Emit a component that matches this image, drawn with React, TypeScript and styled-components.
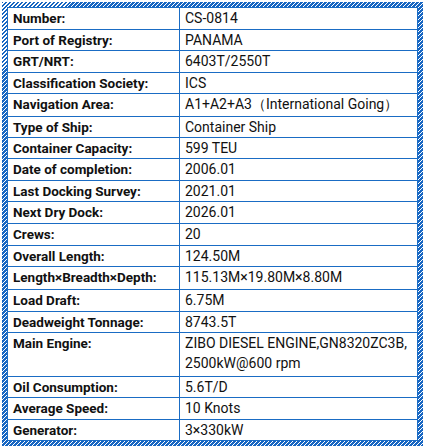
import React from "react";
import styled, { createGlobalStyle } from "styled-components";

const Global = createGlobalStyle`
  html, body { margin: 0; padding: 0; background: #fff; }
  body { font-family: "Roboto", "Noto Sans", sans-serif; }
`;

const Frame = styled.div`
  margin: 2px;
  width: 411px;
  padding: 5px;
  background: repeating-linear-gradient(-45deg, #1766c2 0 1.5px, #ffffff 1.5px 2.828px);
`;

const Table = styled.div`
  background: #fff;
  border: 1px solid #1a6cc4;
  display: grid;
  grid-template-columns: 172px 1fr;
`;

const Label = styled.div<{ $h: number; $last?: boolean }>`
  border-right: 1px solid #1a6cc4;
  border-bottom: ${(p) => (p.$last ? "none" : "1px solid #1a6cc4")};
  padding: 0 5px;
  height: ${(p) => p.$h}px;
  line-height: 20.5px;
  font-weight: 700;
  font-size: 13.5px;
  color: #111;
  white-space: nowrap;
`;

const Value = styled.div<{ $h: number; $last?: boolean }>`
  border-bottom: ${(p) => (p.$last ? "none" : "1px solid #1a6cc4")};
  padding: 0 5px;
  height: ${(p) => p.$h}px;
  line-height: 20.5px;
  font-size: 14px;
  color: #111;
  white-space: nowrap;
`;

const rows: [string, string[], number][] = [
  ["Number:", ["CS-0814"], 20.7],
  ["Port of Registry:", ["PANAMA"], 20.3],
  ["GRT/NRT:", ["6403T/2550T"], 20.7],
  ["Classification Society:", ["ICS"], 20.3],
  ["Navigation Area:", ["A1+A2+A3（International Going）"], 21.7],
  ["Type of Ship:", ["Container Ship"], 20.3],
  ["Container Capacity:", ["599 TEU"], 20],
  ["Date of completion:", ["2006.01"], 20.7],
  ["Last Docking Survey:", ["2021.01"], 20.6],
  ["Next Dry Dock:", ["2026.01"], 20.7],
  ["Crews:", ["20"], 21],
  ["Overall Length:", ["124.50M"], 19.7],
  ["Length×Breadth×Depth:", ["115.13M×19.80M×8.80M"], 22.3],
  ["Load Draft:", ["6.75M"], 21],
  ["Deadweight Tonnage:", ["8743.5T"], 20],
  ["Main Engine:", ["ZIBO DIESEL ENGINE,GN8320ZC3B,", "2500kW@600 rpm"], 42.7],
  ["Oil Consumption:", ["5.6T/D"], 20.3],
  ["Average Speed:", ["10 Knots"], 20.7],
  ["Generator:", ["3×330kW"], 20],
];

export default function App() {
  return (
    <>
      <Global />
      <Frame>
        <Table>
          {rows.map(([label, values, h], i) => {
            const last = i === rows.length - 1;
            return (
              <React.Fragment key={label}>
                <Label $h={h} $last={last}>{label}</Label>
                <Value $h={h} $last={last}>
                  {values.map((v, j) => (
                    <div key={j}>{v}</div>
                  ))}
                </Value>
              </React.Fragment>
            );
          })}
        </Table>
      </Frame>
    </>
  );
}
